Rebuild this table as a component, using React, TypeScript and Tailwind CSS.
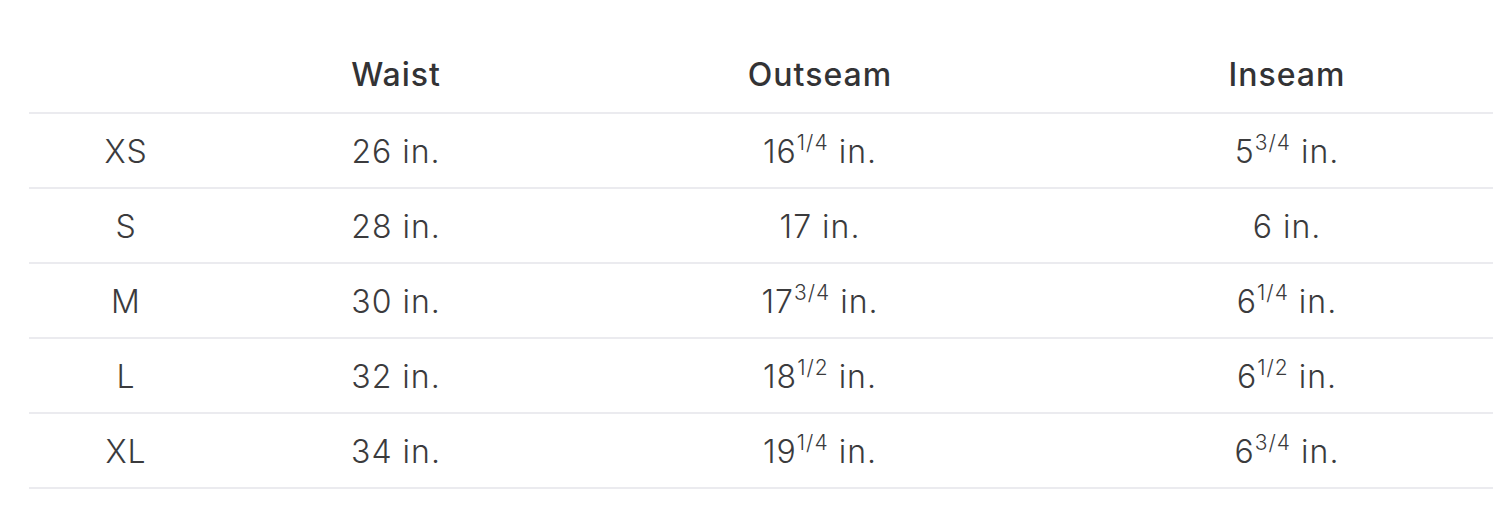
const rows: { size: string; waist: string; out: [string, string?]; ins: [string, string?] }[] = [
    { size: 'XS', waist: '26', out: ['16', '1/4'], ins: ['5', '3/4'] },
    { size: 'S', waist: '28', out: ['17'], ins: ['6'] },
    { size: 'M', waist: '30', out: ['17', '3/4'], ins: ['6', '1/4'] },
    { size: 'L', waist: '32', out: ['18', '1/2'], ins: ['6', '1/2'] },
    { size: 'XL', waist: '34', out: ['19', '1/4'], ins: ['6', '3/4'] },
];

function Measure({ v }: { v: [string, string?] }) {
    return (
        <span>
            {v[0]}
            {v[1] && <sup className="relative top-[-1px] align-super text-[21px] leading-none tracking-[1px]">{v[1]}</sup>} in.
        </span>
    );
}

export default function App() {
    return (
        <div className="h-[521px] bg-white pl-[29px] pr-[7px] pt-[38px] font-['Inter',sans-serif] text-[32px] text-[#3b3b3d]">
            <table className="w-[1464px] table-fixed border-collapse">
                <colgroup>
                    <col className="w-[194px]" />
                    <col className="w-[346px]" />
                    <col className="w-[502px]" />
                    <col className="w-[422px]" />
                </colgroup>
                <thead>
                    <tr className="h-[75px] border-b-2 border-[#ebebef]">
                        <th></th>
                        <th className="text-center font-medium tracking-[1px] text-[#333335]">Waist</th>
                        <th className="text-center font-medium tracking-[1px] text-[#333335]">Outseam</th>
                        <th className="pl-[10px] text-center font-medium tracking-[1px] text-[#333335]">Inseam</th>
                    </tr>
                </thead>
                <tbody>
                    {rows.map(r => (
                        <tr key={r.size} className="h-[75px] border-b-2 border-[#ebebef]">
                            <td className="pt-[3px] text-center font-light tracking-[1px]">{r.size}</td>
                            <td className="pt-[3px] text-center font-light tracking-[1px]">{r.waist} in.</td>
                            <td className="pt-[3px] text-center font-light tracking-[1px]"><Measure v={r.out} /></td>
                            <td className="pl-[10px] pt-[3px] text-center font-light tracking-[1px]"><Measure v={r.ins} /></td>
                        </tr>
                    ))}
                </tbody>
            </table>
        </div>
    );
}
